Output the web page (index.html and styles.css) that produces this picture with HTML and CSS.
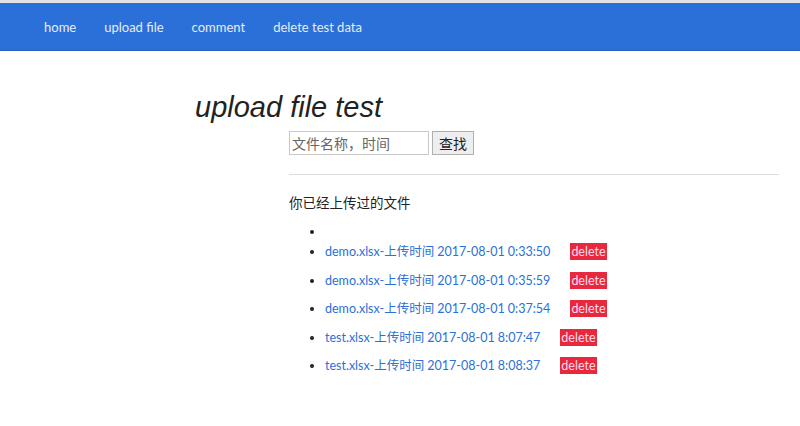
FILE: index.html
```html
<!DOCTYPE html>
<html lang="zh-CN">
<head>
    <meta charset="UTF-8">
    <title>upload file test</title>
    <link rel="stylesheet" href="styles.css">
</head>
<body>
    <div class="topline"></div>
    <nav class="navbar">
        <a href="#">home</a>
        <a href="#">upload file</a>
        <a href="#">comment</a>
        <a href="#">delete test data</a>
    </nav>

    <div class="page">
        <h1>upload file test</h1>
        <div class="content">
            <form class="search">
                <input type="text" placeholder="文件名称，时间">
                <button type="button">查找</button>
            </form>
            <hr>
            <p class="caption">你已经上传过的文件</p>
            <ul class="files">
                <li></li>
                <li><a href="#">demo.xlsx-上传时间 2017-08-01 0:33:50</a><span class="del">delete</span></li>
                <li><a href="#">demo.xlsx-上传时间 2017-08-01 0:35:59</a><span class="del">delete</span></li>
                <li><a href="#">demo.xlsx-上传时间 2017-08-01 0:37:54</a><span class="del">delete</span></li>
                <li><a href="#">test.xlsx-上传时间 2017-08-01 8:07:47</a><span class="del">delete</span></li>
                <li><a href="#">test.xlsx-上传时间 2017-08-01 8:08:37</a><span class="del">delete</span></li>
            </ul>
        </div>
    </div>
</body>
</html>
```

FILE: styles.css
```css
body {
    margin: 0;
    font-family: Lato, "Noto Sans CJK SC", sans-serif;
    font-size: 13.5px;
    color: #222;
    background: #fff;
}
.topline {
    height: 3px;
    background: #e2e2e2;
}
.navbar {
    display: flex;
    height: 47px;
    align-items: center;
    padding-left: 44px;
    gap: 28px;
    background-color: #2a70d8;
    border-bottom: 1px solid #2660bf;
}
.navbar a {
    color: #e6ecf6;
    text-decoration: none;
    font-size: 13px;
}
.page {
    padding-left: 195px;
    padding-top: 38px;
}
h1 {
    margin: 0;
    font-family: "Liberation Sans", Arial, sans-serif;
    font-style: italic;
    font-weight: normal;
    font-size: 29px;
    color: #222;
    line-height: 36px;
}
.content {
    margin-left: 94px;
    margin-right: 21px;
    padding-top: 6px;
}
.search {
    display: flex;
    gap: 3px;
    margin: 0;
}
.search input {
    width: 134px;
    height: 22px;
    padding: 0 2px;
    border: 1px solid #c8c8c8;
    font-family: "Noto Sans CJK SC", sans-serif;
    font-size: 14px;
}
.search input::placeholder {
    color: #666;
}
.search button {
    height: 24px;
    padding: 0 6px;
    border: 1px solid #b0b0b0;
    background: #eee;
    font-family: "Noto Sans CJK SC", sans-serif;
    font-size: 14px;
    color: #222;
}
hr {
    border: 0;
    border-top: 1px solid #ddd;
    margin: 19px 0 17px;
}
.caption {
    margin: 0 0 10px;
}
.files {
    margin: 0;
    padding-left: 36px;
    font-size: 12.5px;
}
.files li {
    min-height: 20px;
    line-height: 20px;
    margin-bottom: 8.6px;
}
.files li:first-child {
    margin-bottom: 0;
}
.files a {
    color: #2a70d8;
    text-decoration: none;
}
.del {
    margin-left: 20px;
    padding: 1px 1px;
    background: #e8283c;
    color: #fde;
}
```
